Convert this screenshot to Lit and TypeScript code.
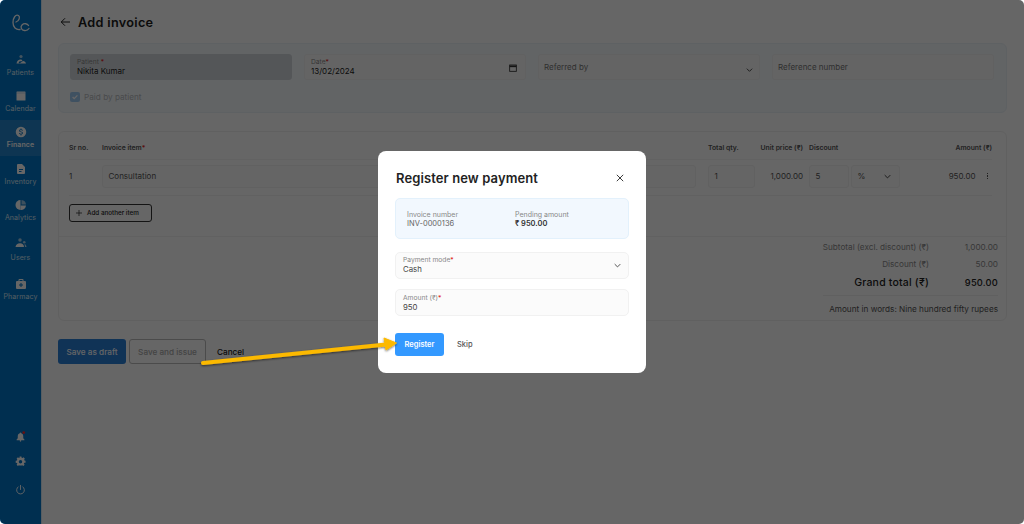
import { LitElement, html, css, svg } from 'lit';
import { customElement } from 'lit/decorators.js';

const icons: Record<string, unknown> = {
  patients: svg`<circle cx="12" cy="5" r="3.2" opacity=".65"/><path d="M3 19c1-5 4-8 8-8 2 0 3 1 4 2l-3 2-2-1-3 3 3 2z"/><path d="M13 16l3-2c3 0 5 2 6 5H9z"/>`,
  calendar: svg`<path d="M4 3h16a1 1 0 0 1 1 1v16a1 1 0 0 1-1 1H4a1 1 0 0 1-1-1V4a1 1 0 0 1 1-1z"/><path d="M3 6h18" stroke="#0276c8" stroke-width="1" opacity=".5"/>`,
  finance: svg`<path fill-rule="evenodd" d="M12 1.5a10.500 10.500 0 1 0 0 21 10.500 10.500 0 0 0 0-21zM11 5h2v1.700c1.600.3 2.700 1.300 2.800 2.800h-1.900c-.1-.8-.8-1.300-1.900-1.300-1.200 0-1.900.5-1.900 1.300 0 .7.600 1.100 2.100 1.500 2.200.5 3.800 1.200 3.800 3.200 0 1.600-1.200 2.600-3 2.900V19h-2v-1.900c-1.800-.3-3-1.400-3.100-3h1.900c.1 1 .9 1.500 2.200 1.500 1.400 0 2-.7 2-1.400 0-.8-.5-1.200-2.200-1.600-2.100-.5-3.700-1.300-3.700-3.100 0-1.500 1.200-2.500 2.900-2.800z"/>`,
  inventory: svg`<path fill-rule="evenodd" d="M6 2h8l6 6v12a2 2 0 0 1-2 2H6a2 2 0 0 1-2-2V4a2 2 0 0 1 2-2zm2 10v1.800h8V12zm0 4v1.800h5V16z"/>`,
  analytics: svg`<path d="M11 2v20a10 10 0 0 1 0-20z"/><path d="M11 13h11a10 10 0 0 1-11 9z"/><path d="M13 2a10 10 0 0 1 9 9h-9z" opacity=".6"/>`,
  users: svg`<circle cx="10" cy="6" r="3.500" opacity=".65"/><circle cx="18.500" cy="10.500" r="2.500" opacity=".65"/><path d="M1 20c.5-4.500 4-7.500 9-7.500s7.500 2.500 8 7.500z"/><path d="M19 14c2 .3 3.500 2.500 4 6h-3c-.2-2-.5-4-1-6z" opacity=".7"/>`,
  pharmacy: svg`<path fill-rule="evenodd" d="M9 2h6a2 2 0 0 1 2 2v2h3a2 2 0 0 1 2 2v12a2 2 0 0 1-2 2H4a2 2 0 0 1-2-2V8a2 2 0 0 1 2-2h3V4a2 2 0 0 1 2-2zm0 2v2h6V4zm2 6v3H8v2h3v3h2v-3h3v-2h-3v-3z"/>`,
  bell: svg`<path d="M12 3a1.500 1.500 0 0 1 1.500 1.500v.6C16.500 6 18 8.500 18 11.500V16l2.500 2.500V20h-17v-1.500L6 16v-4.500C6 8.500 7.500 6 10.500 5.100v-.6A1.500 1.500 0 0 1 12 3z"/><circle cx="12" cy="21.500" r="1.800"/><circle cx="19" cy="3.500" r="3" fill="#ff2a2a"/>`,
  gear: svg`<path fill-rule="evenodd" d="M10 2h4l.5 2.800 1.800.8 2.400-1.600 2.800 2.800-1.600 2.400.8 1.800L23 11.500v4l-2.800.5-.8 1.800 1.600 2.400-2.800 2.800-2.400-1.600-1.300.6H10l-1.300-.6-2.400 1.600-2.800-2.800L5.100 18l-.8-1.800L1.500 15.500v-4l2.800-.5.800-1.800-1.600-2.400 2.800-2.800 2.400 1.600 1.300-.8zm2 7.500a3.800 3.800 0 1 0 0 7.600 3.800 3.800 0 0 0 0-7.600z" transform="translate(0 -1)"/>`,
  power: svg`<path d="M12 3v9" fill="none" stroke="currentColor" stroke-width="2" stroke-linecap="round"/><path d="M7 6.200a8.500 8.500 0 1 0 10 0" fill="none" stroke="currentColor" stroke-width="2" stroke-linecap="round"/>`,
};

const navItems = [
  { key: 'patients', label: 'Patients' },
  { key: 'calendar', label: 'Calendar' },
  { key: 'finance', label: 'Finance', active: true },
  { key: 'inventory', label: 'Inventory' },
  { key: 'analytics', label: 'Analytics' },
  { key: 'users', label: 'Users', tall: true },
  { key: 'pharmacy', label: 'Pharmacy' },
];

const chevron = svg`<svg class="chev" viewBox="0 0 10 6"><path d="M1 1l4 4 4-4" fill="none" stroke="currentColor" stroke-width="1.300"/></svg>`;

@customElement('app-root')
export class AppRoot extends LitElement {
  static styles = css`
    :host {
      display: block;
      width: 1024px;
      height: 524px;
      background: #fff;
      font-family: Inter, 'Noto Sans', sans-serif;
      color: #1c1c1c;
    }

    .screen {
      position: relative;
      display: flex;
      width: 1024px;
      height: 524px;
      overflow: hidden;
      border-radius: 5px;
      background: #fff;
    }

    /* sidebar */
    .side {
      flex: 0 0 41px;
      display: flex;
      flex-direction: column;
      align-items: stretch;
      background: #0276c8;
      border-right: 1px solid #d8e8f4;
      box-sizing: border-box;
      color: #fff;
    }
    .logo {
      height: 47px;
    }
    .logo svg {
      display: block;
      width: 41px;
      height: 48px;
    }
    .nav {
      display: flex;
      flex-direction: column;
    }
    .item {
      height: 36.300px;
      display: flex;
      flex-direction: column;
      align-items: center;
      justify-content: center;
      gap: 2px;
      font-size: 7px;
      letter-spacing: 0.1px;
      color: #d4e7f6;
    }
    .item svg {
      width: 12px;
      height: 12px;
      fill: currentColor;
      color: #fff;
    }
    .item.tall {
      height: 43px;
      gap: 4px;
    }
    .item.active {
      background: #2586cc;
      font-weight: 600;
      color: #fff;
    }
    .bottom {
      margin-top: auto;
      padding-bottom: 29px;
      display: flex;
      flex-direction: column;
      align-items: center;
      gap: 14px;
    }
    .bottom svg {
      width: 11px;
      height: 11px;
      fill: currentColor;
      color: #fff;
      overflow: visible;
    }
    .bottom svg.off {
      margin-top: 3px;
    }

    /* page */
    .main {
      flex: 1;
      min-width: 0;
      padding: 13px 17px 0 16px;
      box-sizing: border-box;
    }
    .title {
      display: flex;
      align-items: center;
      gap: 8px;
      height: 18px;
      padding-left: 2px;
      font-size: 12.700px;
      font-weight: 600;
      letter-spacing: 0.3px;
    }
    .title svg {
      width: 10px;
      height: 10px;
    }
    .card {
      border: 1px solid #f1f1f1;
      border-radius: 6px;
      box-sizing: border-box;
    }
    .top-card {
      margin-top: 12px;
      height: 70px;
      padding: 10px 12px 0 11px;
      background: #f4f9fd;
      border-color: #ebf2f8;
    }
    .fields {
      display: grid;
      grid-template-columns: repeat(4, 1fr);
      gap: 12px;
    }
    .field {
      position: relative;
      height: 26px;
      padding: 3px 6px 0;
      box-sizing: border-box;
      border: 1px solid #f2f2f2;
      border-radius: 3px;
      background: #fbfbfb;
      font-size: 8px;
      line-height: 10px;
    }
    .field small {
      display: block;
      font-size: 6.700px;
      line-height: 8px;
      color: #8a8a8a;
    }
    .field em {
      color: #e02020;
      font-style: normal;
    }
    .field.disabled {
      background: #d3d8dc;
      border-color: #d3d8dc;
    }
    .field.plain {
      display: flex;
      align-items: center;
      padding-top: 0;
      padding-left: 5px;
      color: #777;
    }
    .field svg.cal,
    .field svg.chev {
      position: absolute;
      right: 8px;
      top: 9px;
      width: 8px;
      height: 8px;
      color: #333;
    }
    .field svg.chev {
      right: 6px;
      top: 13px;
      width: 7px;
      height: 4px;
    }
    .check {
      display: flex;
      align-items: center;
      gap: 4px;
      margin-top: 12px;
      font-size: 8.200px;
      color: #b9bcbf;
    }
    .box {
      width: 10px;
      height: 10px;
      border-radius: 2px;
      background: #9fcbf3;
      display: grid;
      place-items: center;
    }
    .box svg {
      width: 8px;
      height: 8px;
    }

    .table-card {
      margin-top: 18px;
      height: 190px;
      display: flex;
      flex-direction: column;
    }
    .rows {
      padding: 0 14px 0 10px;
    }
    .grid {
      display: grid;
      grid-template-columns: 33px 606px 51px 50px 91px 92px;
      align-items: center;
    }
    .head {
      height: 23px;
      margin-top: 4px;
      border-bottom: 1px solid #f5f5f5;
      font-size: 6.800px;
      font-weight: 600;
      color: #555;
      white-space: nowrap;
    }
    .head em {
      color: #e02020;
      font-style: normal;
    }
    .num {
      text-align: right;
    }
    .price {
      padding-right: 6px;
    }
    .row {
      height: 32px;
      padding-bottom: 3px;
      border-bottom: 1px solid #f3f3f3;
      font-size: 8px;
      color: #555;
    }
    .cell {
      height: 23px;
      box-sizing: border-box;
      border: 1px solid #f2f2f2;
      border-radius: 3px;
      background: #fcfcfc;
      display: flex;
      align-items: center;
      padding: 0 5.500px;
    }
    .item-cell {
      margin-right: 12px;
    }
    .qty-cell {
      margin-right: 4px;
    }
    .disc {
      display: flex;
      gap: 2px;
    }
    .disc .cell:first-child {
      width: 40px;
    }
    .disc .cell:last-child {
      width: 49px;
      justify-content: space-between;
    }
    .disc svg.chev {
      width: 7px;
      height: 5px;
      margin-right: 3px;
      color: #333;
    }
    .amount {
      display: flex;
      justify-content: flex-end;
      align-items: center;
      gap: 11px;
      padding-right: 4px;
    }
    .dots {
      display: flex;
      flex-direction: column;
      gap: 1px;
    }
    .dots i {
      width: 1.500px;
      height: 1.500px;
      background: #555;
    }
    .add {
      align-self: flex-start;
      margin: 8px 0 0 10px;
      height: 18px;
      width: 83px;
      display: flex;
      align-items: center;
      gap: 5px;
      padding-left: 6px;
      box-sizing: border-box;
      border: 1px solid #333;
      border-radius: 3px;
      font-size: 6.300px;
      font-weight: 500;
      white-space: nowrap;
    }
    .add svg {
      width: 6px;
      height: 6px;
    }
    .totals {
      margin-top: 14px;
      padding: 0 8px;
      border-top: 1px solid #f3f3f3;
      flex: 1;
      display: flex;
      flex-direction: column;
      align-items: flex-end;
    }
    .line {
      display: grid;
      grid-template-columns: auto 69px;
      justify-items: end;
      height: 17px;
      align-items: center;
      font-size: 8.200px;
      color: #8c8c8c;
    }
    .line.first {
      margin-top: 1px;
    }
    .line.grand {
      height: 19px;
      margin-top: 1px;
      font-size: 10.500px;
      font-weight: 500;
      letter-spacing: 0.2px;
      color: #222;
    }
    .line.grand span:last-child {
      font-size: 9.300px;
    }
    .words {
      margin-top: 3px;
      width: 175px;
      padding-top: 8px;
      border-top: 1px solid #f0f0f0;
      font-size: 8.200px;
      font-weight: 400;
      color: #555;
      white-space: nowrap;
      direction: rtl;
    }
    .actions {
      display: flex;
      align-items: center;
      gap: 3px;
      margin-top: 18px;
    }
    .btn {
      height: 25px;
      display: flex;
      align-items: center;
      justify-content: center;
      box-sizing: border-box;
      border-radius: 3px;
      font-size: 8.200px;
      font-weight: 500;
      white-space: nowrap;
    }
    .btn.primary {
      width: 68px;
      background: #2a7fd8;
      color: #fff;
    }
    .btn.off {
      width: 77px;
      border: 1px solid #bbb;
      color: #aaa;
    }
    .btn.link {
      margin-left: 8px;
      color: #222;
    }

    /* dialog */
    .overlay {
      position: absolute;
      inset: 0;
      display: grid;
      place-items: center;
      background: rgba(0, 0, 0, 0.6);
    }
    .modal {
      width: 268px;
      height: 222px;
      box-sizing: border-box;
      padding: 18px 17px 0 17px;
      border-radius: 8px;
      background: #fff;
    }
    .modal-head {
      display: flex;
      align-items: center;
      justify-content: space-between;
      height: 17px;
      padding-left: 1px;
      font-size: 13px;
      font-weight: 600;
      letter-spacing: 0.1px;
      color: #222;
    }
    .modal-head svg {
      width: 8px;
      height: 8px;
      margin-right: 5px;
    }
    .summary {
      margin-top: 12px;
      height: 41px;
      box-sizing: border-box;
      display: grid;
      grid-template-columns: 108px 1fr;
      align-items: center;
      padding: 0 11px;
      border: 1px solid #e3f1fc;
      border-radius: 5px;
      background: #f2f8fe;
      font-size: 7.500px;
      color: #666;
    }
    .summary small {
      display: block;
      font-size: 7px;
      line-height: 9px;
      color: #888;
    }
    .summary b {
      font-weight: 600;
      color: #333;
    }
    .input {
      position: relative;
      height: 27px;
      margin-top: 10px;
      padding: 3px 7px 0;
      box-sizing: border-box;
      border: 1px solid #f1f1f1;
      border-radius: 5px;
      background: #fbfbfb;
      font-size: 7.800px;
      line-height: 10px;
      color: #444;
    }
    .input.first {
      margin-top: 13px;
    }
    .input.amount-input {
      padding-top: 4px;
    }
    .input small {
      display: block;
      font-size: 6.700px;
      line-height: 8px;
      color: #888;
    }
    .input em {
      color: #e02020;
      font-style: normal;
    }
    .input svg.chev {
      position: absolute;
      right: 7px;
      top: 10px;
      width: 7px;
      height: 5px;
      color: #444;
    }
    .modal-actions {
      display: flex;
      align-items: center;
      gap: 13px;
      margin-top: 17px;
      font-size: 7.500px;
      font-weight: 500;
      color: #555;
    }
    .register {
      width: 49px;
      height: 23px;
      display: grid;
      place-items: center;
      border-radius: 3px;
      background: #3399ff;
      color: #fff;
      font-weight: 600;
    }

    .pointer {
      position: absolute;
      left: 0;
      top: 0;
      width: 1024px;
      height: 524px;
      pointer-events: none;
    }
  `;

  private navItem(item: (typeof navItems)[number]) {
    const cls = `item${item.active ? ' active' : ''}${item.tall ? ' tall' : ''}`;
    return html`<div class=${cls}>
      <svg viewBox="0 0 24 24">${icons[item.key]}</svg>
      <span>${item.label}</span>
    </div>`;
  }

  render() {
    return html`
      <div class="screen">
        <aside class="side">
          <div class="logo">
            <svg viewBox="0 0 41 48" fill="none" stroke="#fff" stroke-width="1.300" stroke-linecap="round">
              <path d="M16 22c3-1 4.500-5 2.500-6.500-3-1.500-5.500 2.500-5.500 7 0 5 3 7.500 7 7" />
              <path d="M28.500 25.500c-1-2-4.500-2.500-6.500-.5s-.5 5.500 2.500 5.500c2 .2 3.500-.5 4.500-2" />
            </svg>
          </div>
          <nav class="nav">${navItems.map((n) => this.navItem(n))}</nav>
          <div class="bottom">
            <svg viewBox="0 0 24 24">${icons.bell}</svg>
            <svg viewBox="0 0 24 24">${icons.gear}</svg>
            <svg class="off" viewBox="0 0 24 24">${icons.power}</svg>
          </div>
        </aside>

        <main class="main">
          <div class="title">
            <svg viewBox="0 0 12 12" fill="none" stroke="#222" stroke-width="1.200">
              <path d="M12 6H1.500M6 1.500L1.500 6 6 10.500" />
            </svg>
            <span>Add invoice</span>
          </div>

          <section class="card top-card">
            <div class="fields">
              <div class="field disabled"><small>Patient <em>*</em></small>Nikita Kumar</div>
              <div class="field">
                <small>Date<em>*</em></small>13/02/2024
                <svg class="cal" viewBox="0 0 12 12" fill="none" stroke="#333" stroke-width="1.300">
                  <rect x="1" y="1.500" width="10" height="9.500" />
                  <path d="M1 3.500h10" stroke-width="2.500" />
                </svg>
              </div>
              <div class="field plain">Referred by ${chevron}</div>
              <div class="field plain">Reference number</div>
            </div>
            <div class="check">
              <span class="box">
                <svg viewBox="0 0 10 10" fill="none" stroke="#fff" stroke-width="1.600"><path d="M2 5l2 2 4-4" /></svg>
              </span>
              Paid by patient
            </div>
          </section>

          <section class="card table-card">
            <div class="rows">
              <div class="grid head">
                <span>Sr no.</span>
                <span>Invoice item<em>*</em></span>
                <span>Total qty.</span>
                <span class="num price">Unit price (₹)</span>
                <span>Discount</span>
                <span class="num">Amount (₹)</span>
              </div>
              <div class="grid row">
                <span>1</span>
                <div class="cell item-cell">Consultation</div>
                <div class="cell qty-cell">1</div>
                <span class="num price">1,000.00</span>
                <div class="disc">
                  <div class="cell">5</div>
                  <div class="cell">% ${chevron}</div>
                </div>
                <div class="amount">950.00 <span class="dots"><i></i><i></i><i></i></span></div>
              </div>
            </div>
            <div class="add">
              <svg viewBox="0 0 10 10" stroke="#222" stroke-width="1.200"><path d="M5 0v10M0 5h10" /></svg>
              Add another item
            </div>
            <div class="totals">
              <div class="line first"><span>Subtotal (excl. discount) (₹)</span><span>1,000.00</span></div>
              <div class="line"><span>Discount (₹)</span><span>50.00</span></div>
              <div class="line grand"><span>Grand total (₹)</span><span>950.00</span></div>
              <div class="words"><span dir="ltr">Amount in words: Nine hundred fifty rupees</span></div>
            </div>
          </section>

          <div class="actions">
            <div class="btn primary">Save as draft</div>
            <div class="btn off">Save and issue</div>
            <div class="btn link">Cancel</div>
          </div>
        </main>

        <div class="overlay">
          <div class="modal">
            <div class="modal-head">
              <span>Register new payment</span>
              <svg viewBox="0 0 10 10" stroke="#333" stroke-width="1.200"><path d="M1 1l8 8M9 1l-8 8" /></svg>
            </div>
            <div class="summary">
              <div><small>Invoice number</small>INV-0000136</div>
              <div><small>Pending amount</small><b>₹ 950.00</b></div>
            </div>
            <div class="input first">
              <small>Payment mode<em>*</em></small>Cash ${chevron}
            </div>
            <div class="input amount-input">
              <small>Amount (₹)<em>*</em></small>950
            </div>
            <div class="modal-actions">
              <div class="register">Register</div>
              <span>Skip</span>
            </div>
          </div>
        </div>

        <svg class="pointer" viewBox="0 0 1024 524">
          <defs>
            <filter id="sh" x="-5%" y="-30%" width="110%" height="170%">
              <feDropShadow dx="0" dy="1" stdDeviation="1" flood-color="#000" flood-opacity=".55" />
            </filter>
          </defs>
          <g filter="url(#sh)" fill="#fcb900" stroke="#fcb900">
            <path d="M203 363L386 344.500" stroke-width="4" stroke-linecap="round" fill="none" />
            <path d="M384 338L396.500 343 386 350z" stroke-width="1" stroke-linejoin="round" />
          </g>
        </svg>
      </div>
    `;
  }
}
